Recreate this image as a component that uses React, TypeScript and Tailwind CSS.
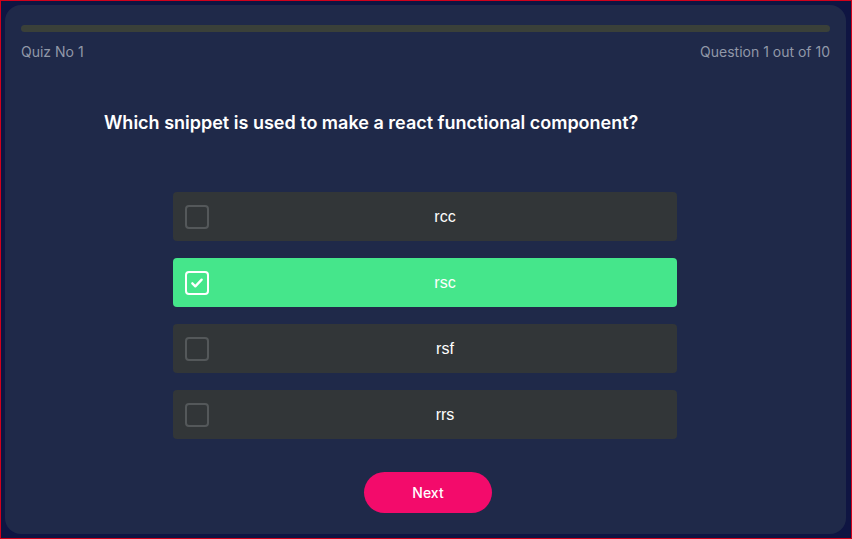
import { useState } from "react";

const options = ["rcc", "rsc", "rsf", "rrs"];

export default function App() {
  const [selected, setSelected] = useState(1);

  return (
    <div className="h-[539px] w-[852px] overflow-hidden border border-[#d0021b] bg-[#0f1542] pt-1 pb-1 pl-1 pr-[5px] font-['Inter',sans-serif]">
      <div className="flex h-full flex-col rounded-2xl bg-[#1f2949] px-4 pt-5">
        <div className="h-[7px] w-full rounded-full bg-[#3a4039]" />
        <div className="mt-2.5 flex justify-between text-sm text-[#9198a8]">
          <span>Quiz No 1</span>
          <span>Question 1 out of 10</span>
        </div>

        <h2 className="mt-[47px] pl-[83px] text-[18px] font-semibold text-white">
          Which snippet is used to make a react functional component?
        </h2>

        <div className="ml-[152px] mt-[56px] flex w-[504px] flex-col gap-[17px]">
          {options.map((opt, i) => {
            const active = i === selected;
            return (
              <button
                key={opt}
                onClick={() => setSelected(i)}
                className={
                  active
                    ? "flex h-[49px] items-center rounded bg-[#45e68b] px-3"
                    : "flex h-[49px] items-center rounded bg-[#323638] px-3"
                }
              >
                <span
                  className={
                    active
                      ? "flex h-6 w-6 items-center justify-center rounded border-2 border-white"
                      : "h-6 w-6 rounded border-2 border-[#54585a]"
                  }
                >
                  {active && (
                    <svg viewBox="0 0 24 24" className="h-4 w-4" fill="none" stroke="white" strokeWidth="3.5" strokeLinecap="round" strokeLinejoin="round">
                      <path d="M5 12.5l4.5 4.5L19 7" />
                    </svg>
                  )}
                </span>
                <span className="flex-1 pl-4 text-center font-['Liberation_Sans',sans-serif] text-base text-white">{opt}</span>
              </button>
            );
          })}
        </div>

        <div className="mt-[33px] flex justify-center pl-[5px]">
          <button className="h-[41px] w-32 rounded-full bg-[#f30b6b] text-sm font-medium text-white">Next</button>
        </div>
      </div>
    </div>
  );
}
